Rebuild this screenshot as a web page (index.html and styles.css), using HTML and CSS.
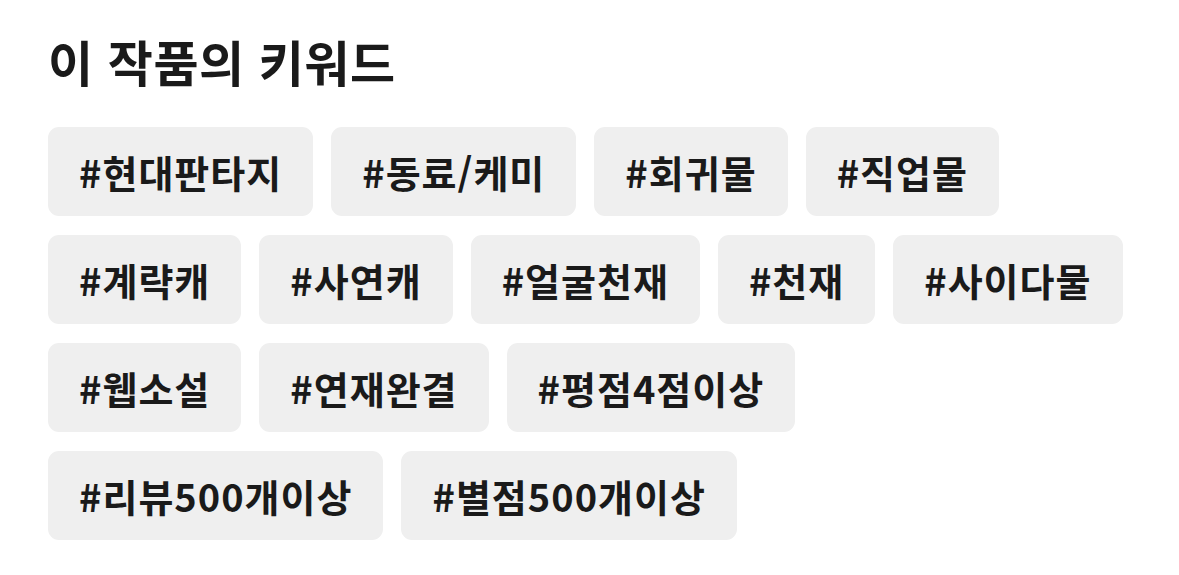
FILE: index.html
```html
<!DOCTYPE html>
<html lang="ko">
<head>
  <meta charset="UTF-8">
  <title>이 작품의 키워드</title>
  <link rel="stylesheet" href="styles.css">
</head>
<body>
  <section class="keywords">
    <h2 class="keywords-title">이 작품의 키워드</h2>
    <ul class="tag-list">
      <li class="tag">#현대판타지</li>
      <li class="tag">#동료/케미</li>
      <li class="tag">#회귀물</li>
      <li class="tag">#직업물</li>
      <li class="tag">#계략캐</li>
      <li class="tag">#사연캐</li>
      <li class="tag">#얼굴천재</li>
      <li class="tag">#천재</li>
      <li class="tag">#사이다물</li>
      <li class="tag">#웹소설</li>
      <li class="tag">#연재완결</li>
      <li class="tag">#평점4점이상</li>
      <li class="tag">#리뷰500개이상</li>
      <li class="tag">#별점500개이상</li>
    </ul>
  </section>
</body>
</html>
```

FILE: styles.css
```css
body {
  margin: 0;
  background: #fff;
  color: #1a1a1a;
  font-family: "Noto Sans CJK KR", "Noto Sans", sans-serif;
}
.keywords {
  padding: 26px 48px 0;
}
.keywords-title {
  margin: 0;
  font-size: 49px;
  font-weight: 700;
  line-height: 70px;
  letter-spacing: 0.5px;
}
.tag-list {
  list-style: none;
  margin: 31px 0 0;
  padding: 0;
  display: flex;
  flex-wrap: wrap;
  gap: 19px 18px;
  max-width: 1090px;
}
.tag {
  background: #efefef;
  border-radius: 11px;
  height: 89px;
  padding: 0 31px;
  display: flex;
  align-items: center;
  font-size: 38px;
  font-weight: 700;
  letter-spacing: 1px;
}
```
